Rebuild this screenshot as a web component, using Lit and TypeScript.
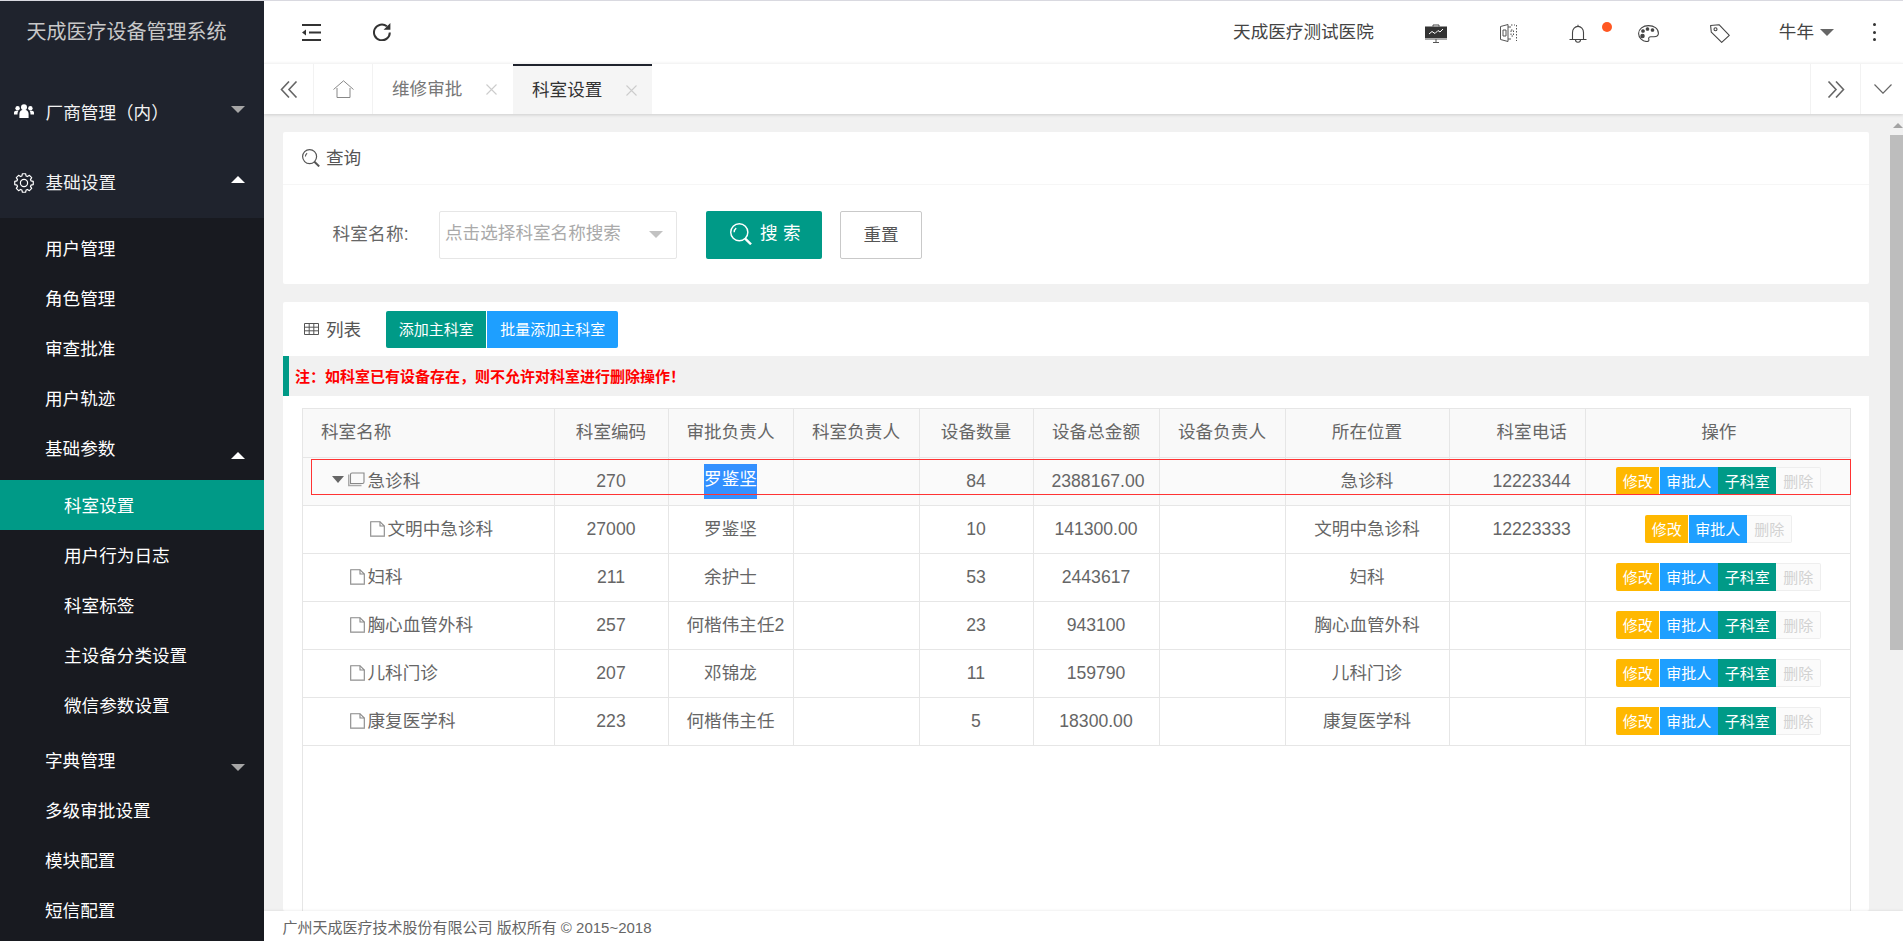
import { LitElement, html, css, svg } from 'lit';
import { customElement } from 'lit/decorators.js';

interface Dept {
  name: string;
  code: string;
  approver: string;
  count: string;
  total: string;
  phone: string;
  child?: boolean;
  parent?: boolean;
  noSub?: boolean;
  selected?: boolean;
}

const DEPTS: Dept[] = [
  { name: '急诊科', code: '270', approver: '罗鉴坚', count: '84', total: '2388167.00', phone: '12223344', parent: true, selected: true },
  { name: '文明中急诊科', code: '27000', approver: '罗鉴坚', count: '10', total: '141300.00', phone: '12223333', child: true, noSub: true },
  { name: '妇科', code: '211', approver: '余护士', count: '53', total: '2443617', phone: '' },
  { name: '胸心血管外科', code: '257', approver: '何楷伟主任2', count: '23', total: '943100', phone: '' },
  { name: '儿科门诊', code: '207', approver: '邓锦龙', count: '11', total: '159790', phone: '' },
  { name: '康复医学科', code: '223', approver: '何楷伟主任', count: '5', total: '18300.00', phone: '' },
];

const COLS = [251, 114, 125, 126, 114, 126, 126, 164, 136, 265];

// 8 tooth gear outline, easier to compute than to type out
function gearPath(cx: number, cy: number, r1: number, r2: number): string {
  const pts: string[] = [];
  for (let i = 0; i < 8; i++) {
    const a = (i * Math.PI) / 4;
    for (const [off, r] of [[-0.3, r1], [-0.17, r2], [0.17, r2], [0.3, r1]] as const) {
      pts.push(`${(cx + r * Math.cos(a + off)).toFixed(2)} ${(cy + r * Math.sin(a + off)).toFixed(2)}`);
    }
  }
  return 'M' + pts.join('L') + 'Z';
}

const searchIcon = (w: number, h: number) => svg`<svg width=${w} height=${h} viewBox="0 0 18 18" fill="none" stroke="currentColor">
  <circle cx="7.6" cy="7.6" r="7" stroke-width="1.2"/>
  <path d="M3.4 7.6a4.200 4.200 0 0 1 1.700-3.400" stroke-width="1.100"/>
  <path d="M12.400 12.800l4.800 4.600" stroke-width="2"/>
</svg>`;

const fileIcon = svg`<svg class="node leaf" width="15" height="16" viewBox="0 0 15 16" fill="none" stroke="#888" stroke-width="1.100">
  <path d="M.7 15.300V.7h9.300l4.300 4.300v10.300z"/><path d="M10 .7v4.300h4.300"/><path d="M.7 15.300h13.600" stroke="#aaa" stroke-width="1.500"/>
</svg>`;

const folderIcon = svg`<svg class="node" width="17" height="15" viewBox="0 0 17 15" fill="none" stroke="#888" stroke-width="1.100">
  <path d="M2.500 11.500V2.500C2.500 1.500 3 1 4 1h12v9c0 1-.5 1.500-1.500 1.500z"/><path d="M.7 2.500v11h12.800" stroke="#aaa" stroke-width="1.500"/>
</svg>`;

@customElement('app-root')
export class AppRoot extends LitElement {
  static styles = css`
    :host {
      display: block;
      height: 100vh;
      overflow: hidden;
      font-family: "Liberation Sans", "Noto Sans CJK SC", sans-serif;
      font-size: 17.6px;
      color: #666;
    }

    .layout {
      display: flex;
      height: 100%;
      box-sizing: border-box;
      border-top: 1px solid #d9d9e0;
    }

    /* sidebar */
    .side {
      width: 264px;
      flex: none;
      background: #1f232d;
      color: #fff;
      overflow: hidden;
    }
    .logo {
      height: 62px;
      line-height: 62px;
      padding-left: 26.5px;
      font-size: 20px;
      color: #c8c8c8;
      margin-bottom: 15px;
    }
    .group {
      height: 70px;
      box-sizing: border-box;
      display: flex;
      align-items: center;
      padding: 0 19px 4px 14px;
      color: #f2f2f2;
    }
    .group svg {
      flex: none;
      margin-right: 11.6px;
    }
    .group svg.gear {
      margin-top: 4px;
    }
    .sub {
      background: #181a20;
      padding: 5px 0 20px;
    }
    .item {
      height: 50px;
      box-sizing: border-box;
      display: flex;
      align-items: center;
      padding: 0 19px 2px 45px;
    }
    .nested {
      margin: 7px 0 5px;
    }
    .nested .item {
      padding-left: 64px;
    }
    .item.active {
      background: #009a87;
    }
    .arrow {
      margin-left: auto;
      width: 0;
      height: 0;
      border-left: 7.5px solid transparent;
      border-right: 7.5px solid transparent;
    }
    .arrow.down {
      border-top: 7px solid #a6a6a6;
    }
    .arrow.up {
      border-bottom: 7px solid #fff;
    }
    .arrow.lift {
      margin-bottom: 4px;
    }
    .arrow.drop {
      margin-top: 17px;
    }

    /* right part */
    .main {
      flex: 1;
      min-width: 0;
      display: flex;
      flex-direction: column;
      background: #f1f1f1;
    }
    .top {
      height: 62px;
      flex: none;
      background: #fff;
      display: flex;
      align-items: center;
      color: #444;
    }
    .top-left {
      display: flex;
      align-items: center;
      gap: 52px;
      padding-left: 38px;
      flex: 1;
      color: #333;
    }
    .hospital {
      margin-right: 26.5px;
      padding-bottom: 4px;
    }
    .cell {
      width: 71px;
      display: flex;
      justify-content: center;
      align-items: center;
      color: #555;
      position: relative;
      padding-top: 2px;
    }
    .cell svg.door {
      margin-left: 3px;
    }
    .dot {
      position: absolute;
      left: 59.5px;
      top: 0.5px;
      width: 10px;
      height: 10px;
      border-radius: 50%;
      background: #ff5722;
    }
    .user {
      display: flex;
      align-items: center;
      margin-left: 23.5px;
      gap: 6px;
      padding-bottom: 4px;
    }
    .caret {
      width: 0;
      height: 0;
      border-left: 7px solid transparent;
      border-right: 7px solid transparent;
      border-top: 7px solid #666;
    }
    .user .caret {
      margin-top: 5px;
    }
    .more {
      width: 58px;
      margin-left: 11px;
      display: flex;
      flex-direction: column;
      align-items: center;
      gap: 4.5px;
    }
    .more i {
      width: 3px;
      height: 3px;
      background: #333;
      border-radius: 50%;
    }

    .tabs {
      height: 51px;
      flex: none;
      display: flex;
      background: #fff;
      border-top: 1px solid #f4f4f4;
      box-sizing: border-box;
      box-shadow: 0 1px 3px rgba(0, 0, 0, 0.15);
      position: relative;
      color: #777;
    }
    .tab-btn {
      display: flex;
      align-items: center;
      justify-content: center;
      flex: none;
      box-sizing: border-box;
      color: #666;
    }
    .tab-btn.prev {
      width: 50px;
      border-right: 1px solid #f2f2f2;
    }
    .tab-btn.home {
      width: 59px;
      border-right: 1px solid #f2f2f2;
      color: #888;
    }
    .tab-btn.next {
      width: 50px;
      margin-left: auto;
      border-left: 1px solid #f2f2f2;
    }
    .tab-btn.menu {
      width: 43px;
      border-left: 1px solid #f2f2f2;
      padding-left: 2px;
    }
    .tab {
      width: 140px;
      box-sizing: border-box;
      padding: 0 0 4px 19px;
      display: flex;
      align-items: center;
      color: #777;
      flex: none;
    }
    .tab svg {
      margin: 4px 0 0 24px;
      flex: none;
    }
    .tab.on {
      width: 139px;
      background: #f5f5f5;
      color: #333;
      border-top: 2px solid #1f232d;
    }

    .body {
      flex: 1;
      min-height: 0;
      display: flex;
    }
    .content {
      flex: 1;
      min-width: 0;
      display: flex;
      flex-direction: column;
      gap: 18px;
      padding: 18px 21px 0 19px;
    }
    .card {
      background: #fff;
      border-radius: 2px;
    }
    .card-head {
      height: 53px;
      box-sizing: border-box;
      display: flex;
      align-items: center;
      padding: 0 0 3px 19px;
      border-bottom: 1px solid #f6f6f6;
      color: #555;
    }
    .card-head svg {
      margin: 3px 6px 0 0;
      color: #555;
    }
    .form {
      display: flex;
      align-items: center;
      height: 99px;
      padding-left: 49.5px;
      color: #666;
    }
    .label {
      width: 106.5px;
      flex: none;
      padding-bottom: 5px;
      letter-spacing: 0.2px;
    }
    .select {
      width: 238px;
      height: 48px;
      box-sizing: border-box;
      border: 1px solid #e6e6e6;
      border-radius: 2px;
      display: flex;
      align-items: center;
      padding: 0 0 6px 5px;
      color: #aaa;
      margin-right: 29px;
    }
    .select .caret {
      margin: 6px 0 0 28px;
      border-top-color: #c2c2c2;
      border-left-width: 7.5px;
      border-right-width: 7.5px;
    }
    .btn {
      height: 48px;
      box-sizing: border-box;
      border-radius: 2px;
      display: flex;
      align-items: center;
      flex: none;
    }
    .btn.search {
      width: 116px;
      background: #009a87;
      color: #fff;
      gap: 8px;
      letter-spacing: 5.5px;
      margin-right: 18px;
      padding: 0 0 6px 24px;
    }
    .btn.search svg {
      margin-top: 5px;
    }
    .btn.reset {
      width: 82px;
      border: 1px solid #c9c9c9;
      color: #555;
      justify-content: center;
      padding-bottom: 3px;
    }

    .list {
      flex: 1;
      min-height: 0;
      overflow: hidden;
    }
    .list-head {
      height: 54px;
      display: flex;
      align-items: center;
      padding-left: 21px;
      color: #555;
    }
    .list-head svg {
      margin-right: 7px;
    }
    .list-title {
      padding-bottom: 2px;
    }
    .add {
      height: 37px;
      box-sizing: border-box;
      padding-bottom: 2px;
      display: flex;
      align-items: center;
      justify-content: center;
      color: #fff;
      font-size: 15px;
    }
    .add.green {
      width: 100px;
      margin-left: 25px;
      background: #009a87;
      border-radius: 2px 0 0 2px;
    }
    .add.blue {
      width: 131px;
      margin-left: 1px;
      background: #1e9fff;
      border-radius: 0 2px 2px 0;
    }
    .note {
      height: 40px;
      box-sizing: border-box;
      display: flex;
      align-items: center;
      background: #f1f1f1;
      border-left: 6px solid #009a87;
      padding: 0 0 2px 6px;
      color: #f00;
      font-size: 15px;
      font-weight: 700;
    }
    .wrap {
      position: relative;
      margin: 12px 18px 0 19px;
      border: 1px solid #e6e6e6;
      border-bottom: none;
      height: 600px;
      box-sizing: border-box;
    }
    table {
      border-collapse: collapse;
      table-layout: fixed;
      width: 1547px;
    }
    th,
    td {
      height: 48px;
      padding: 0 18px;
      box-sizing: border-box;
      font-weight: 400;
      text-align: center;
      white-space: nowrap;
      border: 1px solid #e6e6e6;
      border-top: none;
      color: #666;
    }
    th {
      padding-bottom: 4px;
    }
    td.cn {
      padding-bottom: 4px;
    }
    th:first-child,
    td:first-child {
      border-left: none;
    }
    th:last-child,
    td:last-child {
      border-right: none;
    }
    thead tr {
      background: #f9f9f9;
    }
    tr.hover {
      background: #fafafa;
    }
    th.name {
      text-align: left;
    }
    th.phone {
      padding-left: 47px;
    }
    td.phone {
      padding-left: 43px;
      padding-right: 18px;
    }
    th.op,
    td.op {
      position: relative;
      padding-left: 20px;
      box-shadow: -5px 0 8px -5px rgba(0, 0, 0, 0.14);
    }
    td.op {
      padding: 0 0 0 2px;
    }
    .tree {
      display: flex;
      align-items: center;
      height: 47px;
      box-sizing: border-box;
      padding-bottom: 4px;
    }
    .tree .node {
      flex: none;
      margin-right: 2.5px;
    }
    .tree .node.leaf {
      margin-top: 4px;
    }
    .tree.lv0 {
      padding-left: 47px;
    }
    .tree.lv1 {
      padding-left: 67px;
    }
    .tree.par {
      padding-left: 28.5px;
    }
    .tree .tri {
      width: 0;
      height: 0;
      border-left: 6.5px solid transparent;
      border-right: 6.5px solid transparent;
      border-top: 7px solid #666;
      margin-right: 4.5px;
    }
    td.first {
      padding: 0;
      text-align: left;
    }
    .sel {
      display: inline-block;
      height: 35px;
      line-height: 31px;
      background: #3390ff;
      color: #fff;
      vertical-align: middle;
    }
    .acts {
      display: flex;
      justify-content: center;
      font-size: 15px;
      color: #fff;
    }
    .acts span {
      height: 28px;
      line-height: 29px;
      text-align: center;
      box-sizing: border-box;
    }
    .acts .edit {
      width: 43px;
      background: #ffb800;
      border-radius: 2px 0 0 2px;
      margin-right: 0.5px;
    }
    .acts .appr {
      width: 58px;
      background: #1e9fff;
      margin-right: 0.5px;
    }
    .acts .subd {
      width: 58px;
      background: #009a87;
    }
    .acts .del {
      width: 45px;
      color: #d2d2d2;
      background: #fbfbfb;
      border: 1px solid #eee;
      border-left: none;
      border-radius: 0 2px 2px 0;
      line-height: 27px;
    }
    .mark {
      position: absolute;
      left: 8px;
      top: 49.5px;
      right: -1px;
      height: 36px;
      border: 1.4px solid #ff3333;
      box-sizing: border-box;
      pointer-events: none;
      z-index: 2;
    }

    .bar {
      width: 13px;
      flex: none;
      padding-top: 9px;
    }
    .bar b {
      display: block;
      width: 0;
      height: 0;
      margin: 0 0 7px 3px;
      border-left: 5px solid transparent;
      border-right: 5px solid transparent;
      border-bottom: 5px solid #a3a3a3;
    }
    .bar i {
      display: block;
      height: 515px;
      background: #bdbdbd;
    }

    .foot {
      height: 30px;
      flex: none;
      box-sizing: border-box;
      background: #fff;
      box-shadow: 0 -1px 2px rgba(0, 0, 0, 0.06);
      display: flex;
      align-items: center;
      padding-left: 18.5px;
      font-size: 15px;
      color: #666;
      position: relative;
    }
  `;

  renderMenu() {
    return html`
      <aside class="side">
        <div class="logo">天成医疗设备管理系统</div>
        <div class="group">
          <svg width="20" height="14" viewBox="0 0 20 14" fill="#fff">
            <circle cx="10" cy="3.200" r="3"/><circle cx="3.600" cy="4.200" r="2.200"/><circle cx="16.400" cy="4.200" r="2.200"/>
            <path d="M5.400 14V10c0-2.600 1.800-3.900 3-3.900h3.200c1.200 0 3 1.300 3 3.900v4z"/>
            <path d="M0 10.500V8.800C0 7.500.9 6.800 2 6.800h2.400c-.6.8-.9 1.900-.9 3.200v.5zM20 10.500V8.800c0-1.300-.9-2-2-2h-2.400c.6.8.9 1.900.9 3.200v.5z"/>
          </svg>
          厂商管理（内）
          <span class="arrow down lift"></span>
        </div>
        <div class="group">
          <svg class="gear" width="20" height="20" viewBox="0 0 20 20" fill="none" stroke="#fff" stroke-width="1.200">
            <path d=${gearPath(10, 10, 7.3, 9.4)} stroke-linejoin="round"/><circle cx="10" cy="10" r="3.600"/>
          </svg>
          基础设置
          <span class="arrow up lift"></span>
        </div>
        <div class="sub">
          <div class="item">用户管理</div>
          <div class="item">角色管理</div>
          <div class="item">审查批准</div>
          <div class="item">用户轨迹</div>
          <div class="item">基础参数<span class="arrow up drop"></span></div>
          <div class="nested">
            <div class="item active">科室设置</div>
            <div class="item">用户行为日志</div>
            <div class="item">科室标签</div>
            <div class="item">主设备分类设置</div>
            <div class="item">微信参数设置</div>
          </div>
          <div class="item">字典管理<span class="arrow down drop"></span></div>
          <div class="item">多级审批设置</div>
          <div class="item">模块配置</div>
          <div class="item">短信配置</div>
        </div>
      </aside>
    `;
  }

  renderTop() {
    return html`
      <div class="top">
        <div class="top-left">
          <svg width="19" height="17" viewBox="0 0 19 17" fill="none" stroke="currentColor" stroke-width="2">
            <path d="M0 1h19M7 8.500h12M0 16h19"/><path d="M0 8.500l4-3v6z" fill="currentColor" stroke="none"/>
          </svg>
          <svg width="18" height="18" viewBox="0 0 18 18" fill="none" stroke="currentColor" stroke-width="2">
            <path d="M16.800 9.500a7.900 7.900 0 1 1-2.900-6.200"/><path d="M17.400 0v6.800h-6.800z" fill="currentColor" stroke="none"/>
          </svg>
        </div>
        <span class="hospital">天成医疗测试医院</span>
        <div class="cell">
          <svg width="22" height="19" viewBox="0 0 22 19">
            <path d="M8 2.500V1h6v1.500" fill="none" stroke="#444"/>
            <rect y="2.500" width="22" height="11.500" fill="#333"/>
            <path d="M4 10l3-2.500 3 2 3-3 2 1.500 3-3" fill="none" stroke="#fff"/>
            <path d="M0 15h22M11 15v4M8 18.500h6" fill="none" stroke="#555"/>
          </svg>
        </div>
        <div class="cell">
          <svg class="door" width="17" height="18" viewBox="0 0 17 18" fill="none" stroke="#555" stroke-width="1">
            <path d="M.5 2.500l7.500-2v17l-7.500-2zM8 3h3M8 15h3"/><path d="M3 6h3v6H3z"/>
            <path d="M11 6h2.500v6H11zM16.500 1v16M11 1h4" stroke-dasharray="1.500 1.500"/>
          </svg>
        </div>
        <div class="cell">
          <svg width="18" height="19" viewBox="0 0 18 19" fill="none" stroke="#444" stroke-width="1.100">
            <path d="M9 .8v1.600M3.500 15V8.500C3.500 5 6 2.400 9 2.400s5.500 2.600 5.500 6.100V15M.5 15.500h17"/><path d="M6.500 15.800a2.500 2.500 0 0 0 5 0"/>
          </svg>
          <span class="dot"></span>
        </div>
        <div class="cell">
          <svg width="21" height="17" viewBox="0 0 21 17" fill="none" stroke="#444" stroke-width="1.100">
            <path d="M10.500.6C5 .6.600 4 .600 8.500c0 4.500 4 8 8.400 8 1.600 0 2.200-1 1.800-2.200-.5-1.400.3-2.600 2-2.600h3.200c2.600 0 4.400-1 4.400-3.500C20.400 3.500 16 .6 10.500.6z"/>
            <circle cx="5" cy="6" r="1.300" fill="#444"/><circle cx="9.500" cy="4" r="1.300" fill="#444"/><circle cx="14.500" cy="5" r="1.300" fill="#444"/><circle cx="4.500" cy="11" r="1.700" fill="#444"/>
          </svg>
        </div>
        <div class="cell">
          <svg width="20" height="19" viewBox="0 0 20 19" fill="none" stroke="#444" stroke-width="1.100">
            <path d="M.6 1.500L9 .7l10.300 10.600-7.600 7.100L1.300 8.200z" stroke-linejoin="round"/><circle cx="5.500" cy="5.200" r="1.500"/>
          </svg>
        </div>
        <div class="user">牛年<span class="caret"></span></div>
        <div class="more"><i></i><i></i><i></i></div>
      </div>
    `;
  }

  renderTabs() {
    const close = svg`<svg width="11" height="11" viewBox="0 0 11 11" stroke="#ccc" stroke-width="1.100"><path d="M.5.500l10 10M10.500.500l-10 10"/></svg>`;
    return html`
      <div class="tabs">
        <div class="tab-btn prev">
          <svg width="18" height="17" viewBox="0 0 18 17" fill="none" stroke="currentColor" stroke-width="1.600">
            <path d="M9 .5L1.500 8.500 9 16.500M16.500.5L9 8.500l7.500 8"/>
          </svg>
        </div>
        <div class="tab-btn home">
          <svg width="21" height="18" viewBox="0 0 21 18" fill="none" stroke="currentColor" stroke-width="1">
            <path d="M.5 9.500L10.500.8l10 8.700M4 8v9.500h13V8"/>
          </svg>
        </div>
        <div class="tab">维修审批${close}</div>
        <div class="tab on">科室设置${close}</div>
        <div class="tab-btn next">
          <svg width="18" height="17" viewBox="0 0 18 17" fill="none" stroke="currentColor" stroke-width="1.600">
            <path d="M1.500.5L9 8.500l-7.500 8M9 .5l7.500 8-7.500 8"/>
          </svg>
        </div>
        <div class="tab-btn menu">
          <svg width="18" height="10" viewBox="0 0 18 10" fill="none" stroke="currentColor" stroke-width="1.200">
            <path d="M.5.500L9 9.200 17.500.5"/>
          </svg>
        </div>
      </div>
    `;
  }

  renderRow(d: Dept) {
    const lv = d.parent ? 'par' : d.child ? 'lv1' : 'lv0';
    return html`
      <tr class=${d.selected ? 'hover' : ''}>
        <td class="first">
          <div class="tree ${lv}">
            ${d.parent ? html`<span class="tri"></span>${folderIcon}` : fileIcon}${d.name}
          </div>
        </td>
        <td>${d.code}</td>
        <td class=${d.selected ? '' : 'cn'}>${d.selected ? html`<span class="sel">${d.approver}</span>` : d.approver}</td>
        <td></td>
        <td>${d.count}</td>
        <td>${d.total}</td>
        <td></td>
        <td class="cn">${d.name}</td>
        <td class="phone">${d.phone}</td>
        <td class="op">
          <div class="acts">
            <span class="edit">修改</span><span class="appr">审批人</span>${d.noSub ? '' : html`<span class="subd">子科室</span>`}<span class="del">删除</span>
          </div>
        </td>
      </tr>
    `;
  }

  render() {
    return html`
      <div class="layout">
        ${this.renderMenu()}
        <div class="main">
          ${this.renderTop()}
          ${this.renderTabs()}
          <div class="body">
            <div class="content">
              <section class="card">
                <div class="card-head">${searchIcon(18, 18)}查询</div>
                <div class="form">
                  <span class="label">科室名称:</span>
                  <div class="select">点击选择科室名称搜索<span class="caret"></span></div>
                  <div class="btn search">${searchIcon(22, 22)}<span>搜索</span></div>
                  <div class="btn reset">重置</div>
                </div>
              </section>
              <section class="card list">
                <div class="list-head">
                  <svg width="15" height="12" viewBox="0 0 15 12" fill="none" stroke="#555" stroke-width="1">
                    <path d="M.5.500h14v11H.5zM.5 4.200h14M.5 7.800h14M5.200.5v11M9.800.5v11"/>
                  </svg>
                  <span class="list-title">列表</span>
                  <span class="add green">添加主科室</span><span class="add blue">批量添加主科室</span>
                </div>
                <div class="note">注：如科室已有设备存在，则不允许对科室进行删除操作！</div>
                <div class="wrap">
                  <table>
                    <colgroup>${COLS.map((w) => html`<col style="width:${w}px" />`)}</colgroup>
                    <thead>
                      <tr>
                        <th class="name">科室名称</th>
                        <th>科室编码</th>
                        <th>审批负责人</th>
                        <th>科室负责人</th>
                        <th>设备数量</th>
                        <th>设备总金额</th>
                        <th>设备负责人</th>
                        <th>所在位置</th>
                        <th class="phone">科室电话</th>
                        <th class="op">操作</th>
                      </tr>
                    </thead>
                    <tbody>${DEPTS.map((d) => this.renderRow(d))}</tbody>
                  </table>
                  <div class="mark"></div>
                </div>
              </section>
            </div>
            <div class="bar"><b></b><i></i></div>
          </div>
          <footer class="foot">广州天成医疗技术股份有限公司 版权所有 © 2015~2018</footer>
        </div>
      </div>
    `;
  }
}

declare global {
  interface HTMLElementTagNameMap {
    'app-root': AppRoot;
  }
}
